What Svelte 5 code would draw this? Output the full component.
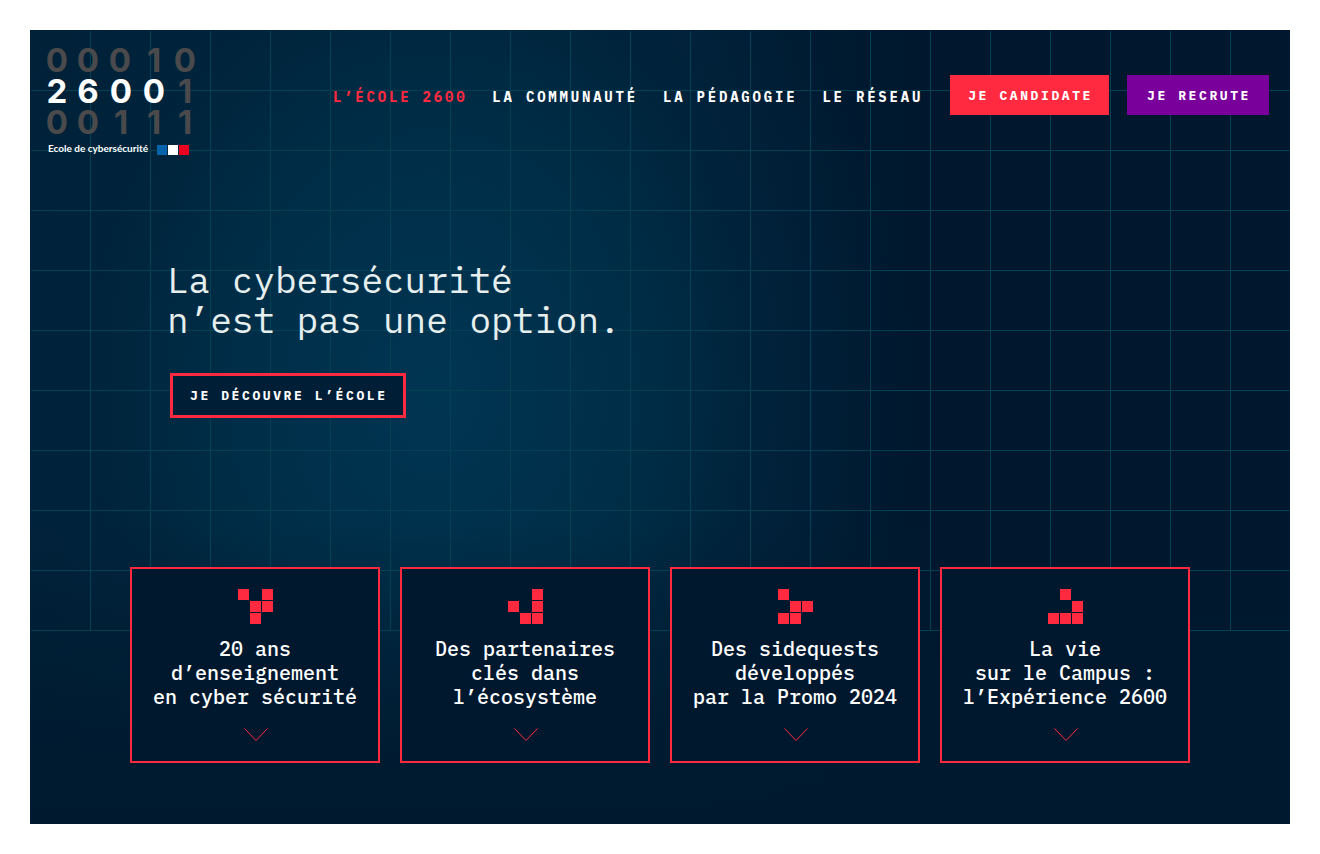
<script lang="ts">
    interface NavLink {
        label: string;
        href: string;
        active?: boolean;
    }

    interface Card {
        href: string;
        lines: string[];
        // [column, row] of each lit square in the 3x3 pictogram
        cells: [number, number][];
    }

    const links: NavLink[] = [
        { label: 'L’École 2600', href: '#ecole', active: true },
        { label: 'La communauté', href: '#communaute' },
        { label: 'La pédagogie', href: '#pedagogie' },
        { label: 'Le réseau', href: '#reseau' }
    ];

    const cards: Card[] = [
        {
            href: '#enseignement',
            lines: ['20 ans', 'd’enseignement', 'en cyber sécurité'],
            cells: [[0, 0], [2, 0], [1, 1], [2, 1], [1, 2]]
        },
        {
            href: '#partenaires',
            lines: ['Des partenaires', 'clés dans', 'l’écosystème'],
            cells: [[2, 0], [0, 1], [2, 1], [1, 2], [2, 2]]
        },
        {
            href: '#sidequests',
            lines: ['Des sidequests', 'développés', 'par la Promo 2024'],
            cells: [[0, 0], [1, 1], [2, 1], [0, 2], [1, 2]]
        },
        {
            href: '#campus',
            lines: ['La vie', 'sur le Campus :', 'l’Expérience 2600'],
            cells: [[1, 0], [2, 1], [0, 2], [1, 2], [2, 2]]
        }
    ];
</script>

<div class="hero">
    <header>
        <a class="logo" href="#accueil" aria-label="2600, Ecole de cybersécurité">
            <svg width="160" height="120" viewBox="0 0 160 120">
                <g class="digits">
                    <text x="15 46 78 112 143" y="34">00010</text>
                    <text x="15 46 79 112" y="65" class="lit">2600</text>
                    <text x="143" y="65">1</text>
                    <text x="15 46 79 112 143" y="96">00111</text>
                </g>
                <text x="6" y="114" class="tagline">Ecole de cybersécurité</text>
                <rect x="115" y="107" width="10" height="10" fill="#0563ac" />
                <rect x="126" y="107" width="10" height="10" fill="#fff" />
                <rect x="137" y="107" width="10" height="10" fill="#ea0320" />
            </svg>
        </a>

        <nav>
            {#each links as link}
                <a href={link.href} class:active={link.active}>{link.label}</a>
            {/each}
        </nav>

        <div class="actions">
            <button type="button">Je candidate</button>
            <button type="button" class="recruit">Je recrute</button>
        </div>
    </header>

    <main>
        <h1>La cybersécurité<br />n’est pas une option.</h1>
        <a class="discover" href="#ecole">Je découvre l’école</a>
    </main>

    <section class="cards">
        {#each cards as card}
            <a class="card" href={card.href}>
                <svg class="picto" width="35" height="35" viewBox="0 0 35 35" aria-hidden="true">
                    {#each card.cells as [col, row]}
                        <rect x={col * 12} y={row * 12} width="11" height="11" />
                    {/each}
                </svg>
                <span class="title">
                    {#each card.lines as line}
                        <span>{line}</span>
                    {/each}
                </span>
                <svg class="chevron" width="24" height="14" viewBox="0 0 24 14" aria-hidden="true">
                    <path d="M.5 .5 12 12.5 23.5 .5" />
                </svg>
            </a>
        {/each}
    </section>
</div>

<style>
    :global(body) {
        background: #fff;
    }

    .hero {
        --red: #ff2a40;
        --line: #024052;
        position: relative;
        display: flex;
        flex-direction: column;
        box-sizing: border-box;
        min-height: calc(100vh - 60px);
        margin: 30px;
        padding-bottom: 61px;
        background:
            linear-gradient(to bottom, transparent 62%, rgba(0, 26, 47, 0.7) 85%, #00192e 100%),
            radial-gradient(ellipse 38% 75% at 32% 45%, #003552 0%, #002e48 40%, rgba(0, 38, 62, 0.6) 70%, transparent 100%),
            linear-gradient(to right, #002138 0%, #002138 45%, #00172d 72%);
        font-family: "IBM Plex Mono", "Liberation Mono", monospace;
        color: #fff;
    }

    /* 60px blueprint grid, ten rows deep */
    .hero::before {
        content: '';
        position: absolute;
        top: 1px;
        left: 1px;
        right: 0;
        height: 600px;
        background:
            linear-gradient(to right, transparent 59px, var(--line) 59px) 0 0 / 60px 60px,
            linear-gradient(to bottom, transparent 59px, var(--line) 59px) 0 0 / 60px 60px;
    }

    header,
    main,
    .cards {
        position: relative;
    }

    header {
        display: flex;
        align-items: flex-start;
        padding: 8px 21px 0 12px;
    }

    .logo svg {
        display: block;
    }

    .digits {
        font: 700 33px Inter, sans-serif;
        text-anchor: middle;
        fill: #4a4a4c;
    }

    .lit {
        fill: #fff;
    }

    .tagline {
        font: 700 10px Lato, sans-serif;
        fill: #fff;
    }

    nav {
        display: flex;
        gap: 25px;
        margin-left: auto;
        padding: 39px 27px 0 0;
    }

    nav a {
        font-size: 14px;
        font-weight: 700;
        line-height: 40px;
        letter-spacing: 0.2em;
        text-transform: uppercase;
        white-space: nowrap;
        text-decoration: none;
        color: #fff;
    }

    nav a.active {
        color: var(--red);
    }

    .actions {
        display: flex;
        gap: 18px;
        padding-top: 37px;
    }

    button,
    .discover {
        font: inherit;
        font-size: 13px;
        font-weight: 700;
        letter-spacing: 0.2em;
        text-transform: uppercase;
        white-space: nowrap;
        color: #fff;
    }

    button {
        padding: 2px 16px 0 18px;
        border: 0;
        background: var(--red);
        line-height: 38px;
        cursor: pointer;
    }

    .recruit {
        padding: 2px 18px 0 20px;
        background: #7a009c;
    }

    main {
        padding: 102px 137px 0;
    }

    h1 {
        margin: 0 0 33px;
        font-size: 36px;
        font-weight: 400;
        line-height: 40px;
        color: #e6eeee;
    }

    .discover {
        display: inline-block;
        margin-left: 3px;
        padding: 0 15px 0 17px;
        border: 3px solid var(--red);
        background: #001e36;
        line-height: 39px;
        text-decoration: none;
    }

    .cards {
        display: grid;
        grid-template-columns: repeat(4, 1fr);
        gap: 20px;
        margin-top: auto;
        padding: 0 100px;
    }

    .card {
        display: flex;
        flex-direction: column;
        align-items: center;
        padding: 20px 0 19px;
        border: 2px solid var(--red);
        background: #00182e;
        color: #fff;
        text-decoration: none;
    }

    .picto {
        fill: var(--red);
    }

    .title {
        display: flex;
        flex-direction: column;
        align-items: center;
        margin: 13px 0 19px;
        font-size: 20px;
        font-weight: 500;
        line-height: 24px;
        white-space: nowrap;
    }

    .chevron {
        margin-left: 2px;
        fill: none;
        stroke: var(--red);
    }
</style>
